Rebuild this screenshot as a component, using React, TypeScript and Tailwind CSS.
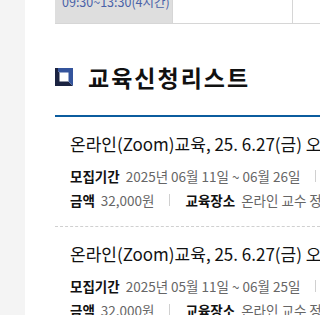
const items = [
  {
    title: '온라인(Zoom)교육, 25. 6.27(금) 오전 교수 정조준 특강',
    period: '2025년 06월 11일 ~ 06월 26일',
    price: '32,000원',
    place: '온라인 교수 정조준 특강',
  },
  {
    title: '온라인(Zoom)교육, 25. 6.27(금) 오후 교수 정조준 특강',
    period: '2025년 05월 11일 ~ 06월 25일',
    price: '32,000원',
    place: '온라인 교수 정조준 특강',
  },
]

function Sep() {
  return <span className="mx-[15px] inline-block h-[12px] w-px shrink-0 bg-[#d0d0d0]" />
}

function HeadIcon() {
  return (
    <svg width="18" height="18" viewBox="0 0 18 18" className="shrink-0">
      <polygon points="0,0 18,18 0,18" fill="#1b2341" />
      <polygon points="0,0 18,0 18,18" fill="#34549c" />
      <rect x="0" y="0" width="3" height="18" fill="#1b2341" />
      <rect x="4.5" y="4.5" width="9" height="9" fill="#ffffff" />
    </svg>
  )
}

export default function App() {
  return (
    <div
      className="flex h-[315px] w-[320px] overflow-hidden bg-white"
      style={{ fontFamily: '"Noto Sans CJK KR", "Noto Sans", sans-serif' }}
    >
      {/* left gutter */}
      <div className="w-[25px] shrink-0 bg-[#f4f4f4]" />

      <div className="min-w-0 flex-1 overflow-hidden pl-[30px]">
        {/* schedule table (cut off) */}
        <div className="flex h-[24px] w-[295px] border-b border-[#d6d6d6]">
          <div className="h-[23px] w-[117px] shrink-0 overflow-hidden bg-[#dedede] pl-[7px]">
            <div className="-mt-[7px] whitespace-nowrap text-[12.5px] leading-[18px] text-[#4a62a8]">
              09:30~13:30(4시간)
            </div>
          </div>
          <div className="h-[23px] w-[120px] shrink-0 border-l border-[#d6d6d6]" />
          <div className="h-[23px] flex-1 border-l border-[#d6d6d6]" />
        </div>

        {/* heading */}
        <div className="mt-[43px] flex items-center gap-[15px]">
          <HeadIcon />
          <h2 className="whitespace-nowrap text-[23px] font-bold leading-[20px] tracking-[2px] text-[#111]">
            교육신청리스트
          </h2>
        </div>

        {/* list */}
        <div className="mt-[28px] border-t-2 border-[#0b5c9e]">
          {items.map((it, i) => (
            <div
              key={i}
              className={`pl-[15px] pt-[15px] pb-[15px] ${i > 0 ? 'border-t border-dashed border-[#d0d0d0]' : ''}`}
            >
              <div className="whitespace-nowrap text-[17px] leading-[24px] text-[#111]">{it.title}</div>
              <div className="mt-[9px] flex items-center whitespace-nowrap text-[13.5px] leading-[22px]">
                <span className="font-bold text-[#111]">모집기간</span>
                <span className="ml-[6px] text-[#666]">{it.period}</span>
                <Sep />
              </div>
              <div className="mt-[2px] flex items-center whitespace-nowrap text-[13.5px] leading-[22px]">
                <span className="font-bold text-[#111]">금액</span>
                <span className="ml-[6px] text-[#666]">{it.price}</span>
                <Sep />
                <span className="font-bold text-[#111]">교육장소</span>
                <span className="ml-[6px] text-[#666]">{it.place}</span>
              </div>
            </div>
          ))}
        </div>
      </div>
    </div>
  )
}
